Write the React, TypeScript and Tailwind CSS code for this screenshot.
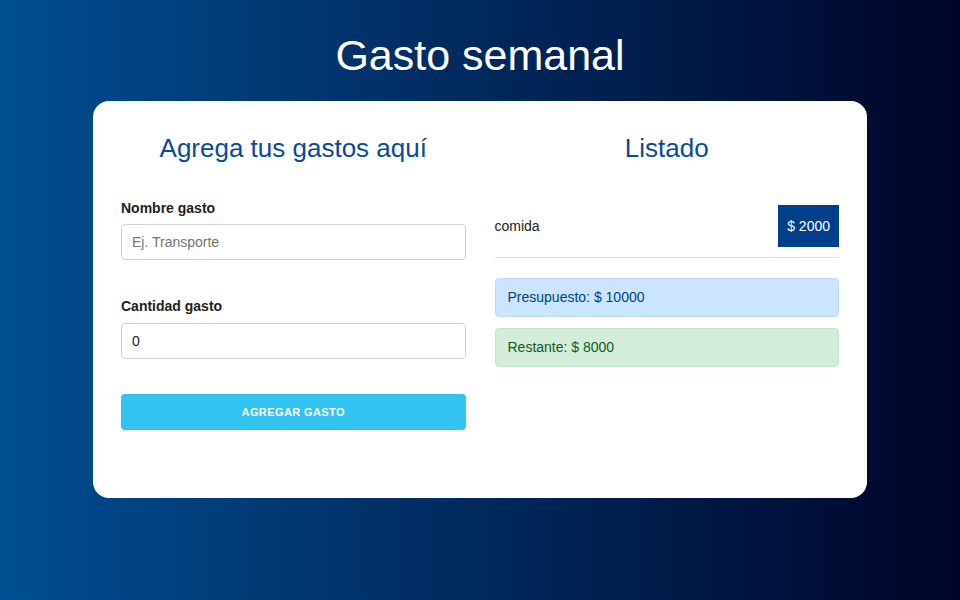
// Weekly expense tracker — form on the left, list + budget on the right

const font = "font-['Liberation_Sans',Arial,sans-serif]";

type Gasto = { id: string; nombre: string; cantidad: number };

const gastos: Gasto[] = [{ id: '1', nombre: 'comida', cantidad: 2000 }];
const presupuesto = 10000;

function Formulario() {
  return (
    <div className="flex flex-col">
      <h2 className="text-center text-[26px] leading-none text-[#0a4a96] h-[26px]">Agrega tus gastos aquí</h2>
      <label className="mt-[37px] text-[14px] leading-[20px] font-bold text-[#222]">Nombre gasto</label>
      <input
        type="text"
        placeholder="Ej. Transporte"
        className="mt-[6px] h-[36px] w-full rounded-[4px] border border-[#d1d1d1] px-[10px] text-[14px] text-[#222] placeholder:text-[#757575] outline-none"
      />
      <label className="mt-[36px] text-[14px] leading-[20px] font-bold text-[#222]">Cantidad gasto</label>
      <input
        type="number"
        defaultValue={0}
        className="mt-[7px] h-[36px] w-full rounded-[4px] border border-[#d1d1d1] px-[10px] text-[14px] text-[#222] outline-none"
      />
      <button
        type="button"
        className="mt-[35px] h-[36px] w-full rounded-[4px] bg-[#33c3f0] text-[11px] font-bold uppercase tracking-[0.4px] text-white"
      >
        Agregar gasto
      </button>
    </div>
  );
}

function Listado() {
  const restante = presupuesto - gastos.reduce((s, g) => s + g.cantidad, 0);
  return (
    <div className="flex flex-col">
      <h2 className="text-center text-[26px] leading-none text-[#0a4a96] h-[26px]">Listado</h2>
      <ul className="mt-[44px]">
        {gastos.map(g => (
          <li key={g.id} className="flex items-center justify-between border-b border-[#e1e1e1] pb-[10px]">
            <span className="text-[14px] text-[#222]">{g.nombre}</span>
            <span className="flex h-[42px] items-center bg-[#00408a] px-[9px] text-[14px] text-white">$ {g.cantidad}</span>
          </li>
        ))}
      </ul>
      <div className="mt-[20px] flex h-[39px] items-center rounded-[4px] border border-[#b8daff] bg-[#cce5ff] px-[12px] text-[14px] text-[#004085]">
        Presupuesto: $ {presupuesto}
      </div>
      <div className="mt-[11px] flex h-[39px] items-center rounded-[4px] border border-[#c3e6cb] bg-[#d4edda] px-[12px] text-[14px] text-[#155724]">
        Restante: $ {restante}
      </div>
    </div>
  );
}

export default function App() {
  return (
    <div className={`${font} flex min-h-screen flex-col items-center bg-[linear-gradient(to_right,#004e92,#000428)]`}>
      <h1 className="mt-[34px] text-[43px] leading-none text-white">Gasto semanal</h1>
      <div className="mt-[24px] h-[397px] w-[774px] rounded-[16px] bg-white px-[28px] pt-[34px]">
        <div className="grid grid-cols-2 gap-[29px]">
          <Formulario />
          <Listado />
        </div>
      </div>
    </div>
  );
}
